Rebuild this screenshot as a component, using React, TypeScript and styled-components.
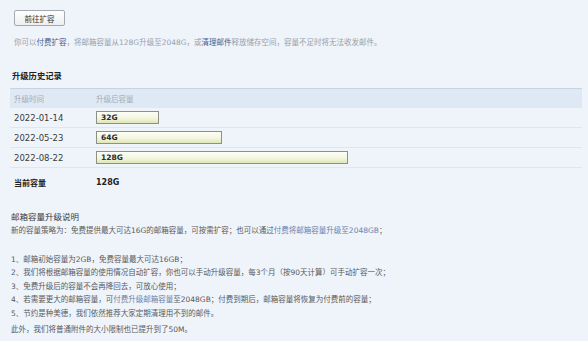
import { FC } from "react";
import styled, { createGlobalStyle } from "styled-components";

interface IUpgrade {
  date: string;
  size: number;
}

const upgrades: IUpgrade[] = [
  { date: "2022-01-14", size: 32 },
  { date: "2022-05-23", size: 64 },
  { date: "2022-08-22", size: 128 },
];

const rules: string[] = [
  "1、邮箱初始容量为2GB，免费容量最大可达16GB；",
  "2、我们将根据邮箱容量的使用情况自动扩容，你也可以手动升级容量，每3个月（按90天计算）可手动扩容一次；",
  "3、免费升级后的容量不会再降回去，可放心使用；",
];

const App: FC = (): JSX.Element => {
  return (
    <>
      <GlobalStyle />
      <Page>
        <ButtonRow>
          <Button>前往扩容</Button>
        </ButtonRow>
        <Notice>
          你可以<Link>付费扩容</Link>，将邮箱容量从128G升级至2048G，或
          <Link>清理邮件</Link>释放储存空间，容量不足时将无法收发邮件。
        </Notice>

        <SectionTitle>升级历史记录</SectionTitle>
        <Table>
          <HeadRow>
            <DateCell>升级时间</DateCell>
            <SizeCell>升级后容量</SizeCell>
          </HeadRow>
          {upgrades.map((item) => (
            <Row key={item.date}>
              <DateCell>{item.date}</DateCell>
              <SizeCell>
                <Bar style={{ width: Math.round((item.size / 128) * 252) }}>
                  {item.size}G
                </Bar>
              </SizeCell>
            </Row>
          ))}
          <TotalRow>
            <DateCell>当前容量</DateCell>
            <SizeCell>128G</SizeCell>
          </TotalRow>
        </Table>

        <Explain>
          <ExplainTitle>邮箱容量升级说明</ExplainTitle>
          <Para>
            新的容量策略为：免费提供最大可达16G的邮箱容量，可按需扩容；也可以通过
            <SoftLink>付费将邮箱容量升级至2048GB</SoftLink>；
          </Para>
          <List>
            {rules.map((r) => (
              <Line key={r}>{r}</Line>
            ))}
            <Line>
              4、若需要更大的邮箱容量，可<SoftLink>付费升级邮箱容量</SoftLink>
              至2048GB；付费到期后，邮箱容量将恢复为付费前的容量；
            </Line>
            <Line>5、节约是种美德，我们依然推荐大家定期清理用不到的邮件。</Line>
          </List>
          <Para>此外，我们将普通附件的大小限制也已提升到了50M。</Para>
        </Explain>
      </Page>
    </>
  );
};

export default App;

const GlobalStyle = createGlobalStyle`
  html, body {
    margin: 0;
    background: #eff4fb;
  }
  body {
    font-family: "DejaVu Sans", "Noto Sans CJK SC", sans-serif;
    color: #333;
  }
`;

const Page = styled.div`
  width: 588px;
  height: 341px;
  box-sizing: border-box;
  padding: 10px 6px 0 10px;
  overflow: hidden;
`;

const ButtonRow = styled.div`
  display: flex;
  padding-left: 4px;
`;

const Button = styled.button`
  width: 51px;
  height: 16px;
  padding: 0;
  border: 1px solid #a5a9b0;
  border-radius: 2px;
  background: linear-gradient(#ffffff, #eceef1);
  font-family: "DejaVu Sans", "Noto Sans CJK SC", sans-serif;
  font-size: 7.5px;
  color: #333;
`;

const Notice = styled.div`
  margin-top: 12px;
  padding-left: 4px;
  font-size: 7.5px;
  line-height: 10px;
  color: #9aa0a8;
  white-space: nowrap;
`;

const Link = styled.span`
  color: #3e5d8c;
`;

const SoftLink = styled.span`
  color: #6a82aa;
`;

const SectionTitle = styled.div`
  margin-top: 22px;
  padding-left: 2px;
  font-size: 8.3px;
  line-height: 12px;
  font-weight: bold;
  color: #222;
`;

const Table = styled.div`
  margin-top: 6px;
  display: flex;
  flex-direction: column;
`;

const Row = styled.div`
  box-sizing: border-box;
  display: grid;
  grid-template-columns: 86px 1fr;
  align-items: center;
  height: 20px;
  border-bottom: 1px solid #e0e6ee;
  font-size: 8.5px;
  color: #3a3a3a;
`;

const HeadRow = styled(Row)`
  background: #dfe9f6;
  border-top: 1px solid #c9d2dd;
  border-bottom: none;
  color: #a3abb5;
  font-size: 7.5px;
`;

const TotalRow = styled(Row)`
  margin-top: 4px;
  border-bottom: none;
  font-weight: bold;
  font-size: 8px;
  color: #222;
`;

const DateCell = styled.div`
  padding-left: 4px;
  white-space: nowrap;
`;

const SizeCell = styled.div`
  display: flex;
  align-items: center;
`;

const Bar = styled.div`
  box-sizing: border-box;
  height: 13px;
  padding-left: 4px;
  border: 1px solid #8d9185;
  background: linear-gradient(#fdfef6, #f3f6df 55%, #dfe7b8);
  font-size: 7.5px;
  line-height: 11px;
  font-weight: bold;
  color: #2b2b2b;
`;

const Explain = styled.div`
  margin-top: 19px;
  padding-left: 1px;
  font-size: 7.5px;
  line-height: 13.5px;
  color: #5a5a5a;
  white-space: nowrap;
`;

const ExplainTitle = styled.div`
  font-size: 8.5px;
  line-height: 13px;
  color: #3a3a3a;
`;

const Para = styled.div``;

const List = styled.div`
  margin: 15px 0 3px;
  display: flex;
  flex-direction: column;
`;

const Line = styled.div``;
